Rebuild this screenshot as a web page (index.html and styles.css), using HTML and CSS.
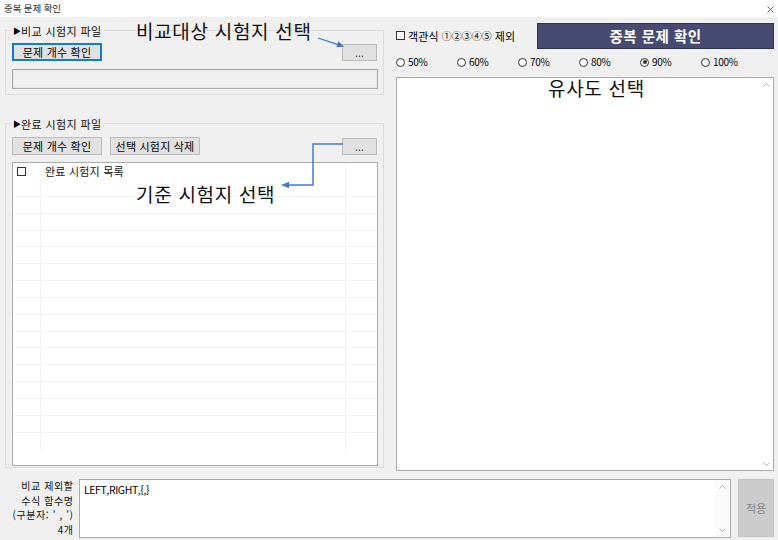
FILE: index.html
```html
<!DOCTYPE html>
<html lang="ko">
<head>
<meta charset="utf-8">
<title>중복 문제 확인</title>
<link rel="stylesheet" href="styles.css">
</head>
<body>
<div class="window">
  <div class="titlebar">
    <span class="title">중복 문제 확인</span>
    <svg class="close" width="7" height="7" viewBox="0 0 7 7"><path d="M0.5 0.5L6.5 6.5M6.5 0.5L0.5 6.5" stroke="#6b6b6b" stroke-width="1"/></svg>
  </div>

  <div class="main">
    <div class="left">
      <div class="group g1">
        <div class="gtitle"><span class="tri">▶</span>비교 시험지 파일</div>
        <div class="btnrow">
          <button class="btn focus">문제 개수 확인</button>
          <button class="btn dots">...</button>
        </div>
        <div class="input"></div>
      </div>

      <div class="group g2">
        <div class="gtitle"><span class="tri">▶</span>완료 시험지 파일</div>
        <div class="btnrow">
          <button class="btn">문제 개수 확인</button>
          <button class="btn">선택 시험지 삭제</button>
          <button class="btn dots">...</button>
        </div>
        <div class="list">
          <div class="lrow head"><div class="c1"><span class="chk"></span></div><div class="c2">완료 시험지 목록</div><div class="c3"></div></div>
          <div class="lrow"><div class="c1"></div><div class="c2"></div><div class="c3"></div></div>
          <div class="lrow"><div class="c1"></div><div class="c2"></div><div class="c3"></div></div>
          <div class="lrow"><div class="c1"></div><div class="c2"></div><div class="c3"></div></div>
          <div class="lrow"><div class="c1"></div><div class="c2"></div><div class="c3"></div></div>
          <div class="lrow"><div class="c1"></div><div class="c2"></div><div class="c3"></div></div>
          <div class="lrow"><div class="c1"></div><div class="c2"></div><div class="c3"></div></div>
          <div class="lrow"><div class="c1"></div><div class="c2"></div><div class="c3"></div></div>
          <div class="lrow"><div class="c1"></div><div class="c2"></div><div class="c3"></div></div>
          <div class="lrow"><div class="c1"></div><div class="c2"></div><div class="c3"></div></div>
          <div class="lrow"><div class="c1"></div><div class="c2"></div><div class="c3"></div></div>
          <div class="lrow"><div class="c1"></div><div class="c2"></div><div class="c3"></div></div>
          <div class="lrow"><div class="c1"></div><div class="c2"></div><div class="c3"></div></div>
          <div class="lrow"><div class="c1"></div><div class="c2"></div><div class="c3"></div></div>
          <div class="lrow"><div class="c1"></div><div class="c2"></div><div class="c3"></div></div>
          <div class="lrow"><div class="c1"></div><div class="c2"></div><div class="c3"></div></div>
          <div class="lrow last"><div class="c1"></div><div class="c2"></div><div class="c3"></div></div>
        </div>
      </div>
    </div>

    <div class="right">
      <div class="toprow">
        <div class="opt"><span class="chk"></span><span>객관식</span><span class="circ">①②③④⑤</span><span>제외</span></div>
        <button class="primary">중복 문제 확인</button>
      </div>
      <div class="radios">
        <span class="radio"><span class="rb"></span>50%</span>
        <span class="radio"><span class="rb"></span>60%</span>
        <span class="radio"><span class="rb"></span>70%</span>
        <span class="radio"><span class="rb"></span>80%</span>
        <span class="radio"><span class="rb on"></span>90%</span>
        <span class="radio"><span class="rb"></span>100%</span>
      </div>
      <div class="textbox big">
        <div class="tcontent"></div>
        <div class="sbar">
          <svg width="7" height="4" viewBox="0 0 7 4"><path d="M0.5 3.5L3.5 0.5L6.5 3.5" fill="none" stroke="#b4b4b4"/></svg>
          <svg width="7" height="4" viewBox="0 0 7 4"><path d="M0.5 0.5L3.5 3.5L6.5 0.5" fill="none" stroke="#b4b4b4"/></svg>
        </div>
      </div>
    </div>
  </div>

  <div class="bottom">
    <div class="blabel">
      <div class="bl">비교 제외할</div>
      <div class="bl">수식 함수명</div>
      <div class="bl">(구분자: ' , ')</div>
      <div class="bl">4개</div>
    </div>
    <div class="textbox small">
      <div class="tcontent">LEFT,RIGHT,{,}</div>
      <div class="sbar">
        <svg width="7" height="4" viewBox="0 0 7 4"><path d="M0.5 3.5L3.5 0.5L6.5 3.5" fill="none" stroke="#b4b4b4"/></svg>
        <svg width="7" height="4" viewBox="0 0 7 4"><path d="M0.5 0.5L3.5 3.5L6.5 0.5" fill="none" stroke="#b4b4b4"/></svg>
      </div>
    </div>
    <button class="apply">적용</button>
  </div>

  <div class="ann ann1">비교대상 시험지 선택</div>
  <div class="ann ann2">기준 시험지 선택</div>
  <div class="ann ann3">유사도 선택</div>

  <svg class="arrows" width="778" height="540" viewBox="0 0 778 540">
    <line x1="318" y1="38" x2="338" y2="44.6" stroke="#4472c4" stroke-width="1.3"/>
    <polygon points="344,46.5 336.4,47.3 338.4,41.2" fill="#4472c4"/>
    <polyline points="343,144 313,144 313,185 288,185" fill="none" stroke="#4a78cc" stroke-width="1.5"/>
    <polygon points="281,185 289,181.8 289,188.2" fill="#4a78cc"/>
  </svg>
</div>
</body>
</html>
```

FILE: styles.css
```css
html, body {
  margin: 0;
  padding: 0;
}

body {
  background: #f0f0f0;
  font-family: "Noto Sans CJK KR", "Noto Sans", sans-serif;
  font-size: 11px;
  color: #000;
}

.window {
  position: relative;
  width: 778px;
  height: 540px;
  overflow: hidden;
}

/* title bar */
.titlebar {
  height: 17px;
  background: #ffffff;
  display: flex;
  align-items: center;
  justify-content: space-between;
  padding: 0 4px 0 4px;
  box-sizing: border-box;
}

.title {
  font-size: 9.5px;
  line-height: 17px;
  color: #2a2a2a;
  letter-spacing: -0.1px;
}

.close {
  display: block;
  margin-top: 1px;
}

/* main area */
.main {
  display: flex;
  height: 458px;
  padding: 0 4px 0 5px;
  gap: 12px;
}

.left {
  width: 379px;
  flex: none;
}

.group {
  border: 1px solid #dcdcdc;
  padding: 0 5px 0 6px;
  line-height: 16px;
}

.g1 {
  margin-top: 13px;
  padding-bottom: 5px;
}

.g2 {
  margin-top: 28px;
  padding-bottom: 1px;
}

.gtitle {
  width: fit-content;
  height: 16px;
  line-height: 16px;
  margin-top: -8px;
  background: #f0f0f0;
  padding-right: 2px;
  letter-spacing: 0.4px;
  color: #111;
  display: flex;
  align-items: center;
}

.tri {
  font-size: 8px;
  line-height: 16px;
  letter-spacing: 0;
  color: #000;
  margin-left: 1px;
}

.btnrow {
  display: flex;
  align-items: flex-start;
  gap: 8px;
  height: 18px;
  margin-top: 4px;
}

.g2 .btnrow {
  margin-top: 5px;
}

.btn {
  width: 90px;
  height: 18px;
  padding: 0;
  box-sizing: border-box;
  font-family: inherit;
  font-size: 11px;
  line-height: 15px;
  letter-spacing: 0.2px;
  color: #000;
  background: #e1e1e1;
  border: 1px solid #bcbcbc;
}

.btn.focus {
  border: 2px solid #0f7bd5;
  line-height: 13px;
}

.btn.dots {
  width: 35px;
  height: 17px;
  margin-left: auto;
  margin-top: 1px;
  margin-right: 1px;
  line-height: 12px;
  font-size: 10px;
  color: #333;
}

.input {
  margin-top: 8px;
  height: 20px;
  box-sizing: border-box;
  border: 1px solid #a9a9a9;
  box-shadow: inset 0 0 0 1px #e6e6e6;
  background: #f0f0f0;
}

/* list */
.list {
  margin-top: 7px;
  height: 304px;
  box-sizing: border-box;
  border: 1px solid #ababab;
  background: #ffffff;
  overflow: hidden;
}

.lrow {
  display: flex;
  height: 16.85px;
  box-sizing: border-box;
  border-bottom: 1px solid #f3f3f3;
}

.lrow.head {
  height: 17px;
  border-bottom: none;
  align-items: center;
}

.lrow.last {
  border-bottom: none;
}

.c1 {
  width: 28px;
  flex: none;
  box-sizing: border-box;
  border-right: 1px solid #f3f3f3;
  padding-left: 4px;
  display: flex;
  align-items: center;
  align-self: stretch;
}

.head .c1 {
  border-right-color: #ffffff;
}

.c2 {
  width: 305px;
  flex: none;
  box-sizing: border-box;
  border-right: 1px solid #f0f0f0;
  padding-left: 4px;
  align-self: stretch;
  line-height: 17px;
  letter-spacing: 0.2px;
  color: #111;
}

.c3 {
  flex: 1;
}

.chk {
  display: inline-block;
  width: 9px;
  height: 9px;
  box-sizing: border-box;
  border: 1px solid #333;
  background: #fff;
  flex: none;
}

/* right column */
.right {
  width: 378px;
  flex: none;
  display: flex;
  flex-direction: column;
}

.toprow {
  margin-top: 6px;
  height: 26px;
  display: flex;
  align-items: center;
  justify-content: space-between;
}

.opt {
  display: flex;
  align-items: center;
  gap: 2px;
  line-height: 16px;
  margin-top: -1px;
  letter-spacing: 0.1px;
}

.opt .chk {
  margin-right: 1px;
}

.circ {
  font-size: 10px;
  letter-spacing: 0;
  margin: 0 1px;
}

.primary {
  width: 237px;
  height: 26px;
  box-sizing: border-box;
  background: #474b72;
  border: 1px solid #2e3254;
  color: #ffffff;
  font-family: inherit;
  font-size: 14.5px;
  font-weight: bold;
  letter-spacing: 0.5px;
  padding: 0;
  line-height: 22px;
}

.radios {
  height: 26px;
  display: flex;
  align-items: center;
}

.radio {
  width: 61px;
  flex: none;
  display: flex;
  align-items: center;
  font-size: 10px;
  letter-spacing: -0.3px;
  line-height: 14px;
}

.rb {
  width: 9px;
  height: 9px;
  box-sizing: border-box;
  border: 1px solid #333;
  border-radius: 50%;
  background: #fff;
  margin-right: 3px;
  flex: none;
  display: flex;
  align-items: center;
  justify-content: center;
}

.rb.on::after {
  content: "";
  width: 4px;
  height: 4px;
  border-radius: 50%;
  background: #333;
}

.textbox {
  display: flex;
  box-sizing: border-box;
  border: 1px solid #ababab;
  background: #ffffff;
}

.textbox.big {
  margin-top: 2px;
  height: 394px;
}

.tcontent {
  flex: 1;
}

.sbar {
  width: 13px;
  flex: none;
  display: flex;
  flex-direction: column;
  align-items: center;
  justify-content: space-between;
}

.big .sbar {
  padding: 5px 0 4px 0;
}

.big .sbar svg {
  display: block;
}

/* bottom row */
.bottom {
  display: flex;
  margin-top: 4px;
  height: 59px;
  padding-right: 4px;
}

.blabel {
  width: 73px;
  flex: none;
  display: flex;
  flex-direction: column;
  align-items: flex-end;
  padding-top: 0;
  color: #111;
}

.bl {
  height: 14.5px;
  font-size: 10px;
  line-height: 14.5px;
  letter-spacing: 0.6px;
  margin-right: -0.6px;
  white-space: nowrap;
}

.textbox.small {
  margin-left: 6px;
  width: 652px;
  flex: none;
  height: 59px;
}

.small .tcontent {
  padding: 3px 0 0 4px;
  line-height: 14px;
  font-size: 10.5px;
  letter-spacing: -0.4px;
}

.small .sbar {
  width: 16px;
  padding: 5px 0 5px 0;
  box-sizing: border-box;
  background: #fbfbfb;
}

.small .sbar svg {
  display: block;
}

.apply {
  margin-left: 7px;
  width: 36px;
  height: 58px;
  box-sizing: border-box;
  background: #cccccc;
  border: 1px solid #c2c2c2;
  color: #858585;
  font-family: inherit;
  font-size: 11px;
  padding: 0;
}

/* annotations overlaid on the screenshot */
.ann {
  position: absolute;
  font-size: 19px;
  line-height: 20px;
  color: #111;
  letter-spacing: 0.7px;
  white-space: nowrap;
}

.ann1 {
  left: 136px;
  top: 21px;
}

.ann2 {
  left: 136px;
  top: 184px;
}

.ann3 {
  left: 548px;
  top: 78px;
}

.arrows {
  position: absolute;
  left: 0;
  top: 0;
  pointer-events: none;
}
```
